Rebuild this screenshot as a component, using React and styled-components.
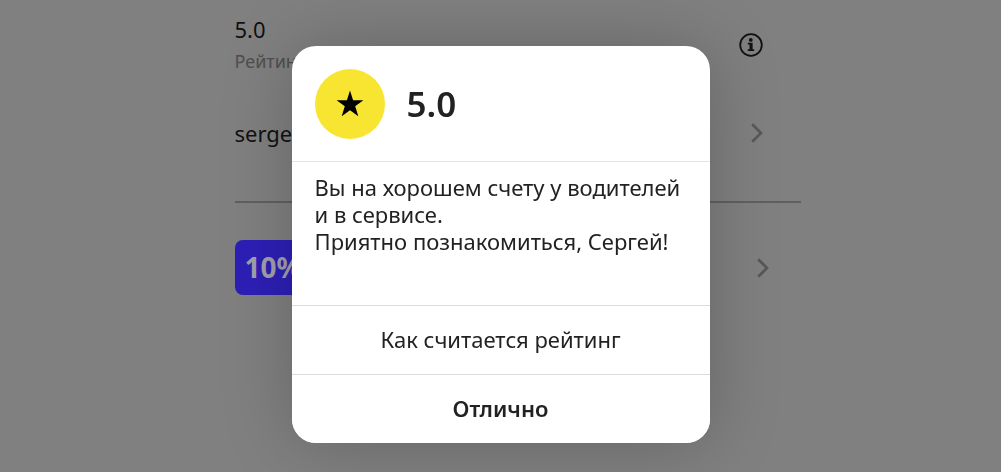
import React from "react";
import styled, { createGlobalStyle } from "styled-components";

const GlobalStyle = createGlobalStyle`
  *, *::before, *::after { box-sizing: border-box; }
  body {
    margin: 0;
    background: #808080;
    color: #111;
    font-family: "Noto Sans", "Open Sans", sans-serif;
  }
`;

const Page = styled.main`
  max-width: 600px;
  min-height: 100vh;
  margin: 0 auto;
  padding: 13px 0 0 34px;
`;

const Row = styled.div`
  display: flex;
  align-items: center;
  justify-content: space-between;
  min-height: ${(p) => p.$height}px;
  padding-right: ${(p) => p.$inset}px;
`;

const Rating = styled.div`
  display: flex;
  flex-direction: column;
`;

const Value = styled.span`
  font-size: 22px;
  line-height: 32px;
`;

const Caption = styled.span`
  font-size: 18px;
  line-height: 32px;
  color: #4e4e4e;
`;

const Divider = styled.hr`
  height: 2px;
  margin: 12px 0 37px;
  border: 0;
  background: #606060;
`;

const Promo = styled.div`
  width: 160px;
  padding: 0 10px;
  border-radius: 8px;
  background: #2d1fb6;
  color: #a2a0ac;
  font-size: 28px;
  font-weight: 700;
  line-height: 55px;
`;

const IconButton = styled.button`
  display: flex;
  padding: 0;
  border: 0;
  background: none;
  color: ${(p) => (p.$muted ? "#585858" : "#111")};
  cursor: pointer;
`;

const Overlay = styled.div`
  position: fixed;
  inset: 0;
  display: flex;
  align-items: center;
  justify-content: center;
  padding: 46px 16px 29px;
`;

const Dialog = styled.section`
  width: 100%;
  max-width: 418px;
  overflow: hidden;
  border-radius: 24px;
  background: #fff;
  color: #222;
  box-shadow: 0 0 70px rgba(0, 0, 0, 0.22);
`;

const Header = styled.header`
  display: flex;
  align-items: center;
  gap: 22px;
  padding: 23px 23px 22px;
`;

const Badge = styled.div`
  display: flex;
  align-items: center;
  justify-content: center;
  width: 70px;
  height: 70px;
  border-radius: 50%;
  background: #f8e532;
  color: #000;
`;

const Title = styled.h1`
  margin: 0;
  font-size: 35px;
  font-weight: 600;
  line-height: 46px;
`;

const Message = styled.p`
  min-height: 144px;
  margin: 0;
  padding: 12px 23px;
  border-top: 1px solid #e4e4e4;
  font-size: 22px;
  line-height: 27px;
`;

const Action = styled.button`
  display: block;
  width: 100%;
  height: 69px;
  padding: 0 23px 2px;
  border: 0;
  border-top: 1px solid #dcdcdc;
  background: #fff;
  color: #222;
  font-family: inherit;
  font-size: 22px;
  font-weight: ${(p) => (p.$primary ? 600 : 400)};
  cursor: pointer;
`;

function Chevron() {
  return (
    <svg width="12" height="20" viewBox="0 0 12 20" fill="none" stroke="currentColor" strokeWidth="2.7" aria-hidden="true">
      <path d="M1.2 1.2 10 10 1.2 18.8" />
    </svg>
  );
}

function InfoIcon() {
  return (
    <svg width="24" height="24" viewBox="0 0 24 24" aria-hidden="true">
      <circle cx="12" cy="12" r="10.8" fill="none" stroke="currentColor" strokeWidth="1.8" />
      <circle cx="11.8" cy="6.9" r="1.9" fill="currentColor" />
      <path d="M8.8 9.7h4.8v6.6h1.6V18H8.8v-1.7h1.7v-4.9H8.8z" fill="currentColor" />
    </svg>
  );
}

function Star() {
  return (
    <svg width="28" height="28" viewBox="0 0 28 28" fill="currentColor" aria-hidden="true">
      <path d="M14 0.5 17.1 10.2 27.4 10.2 19.2 16.3 22.3 26.2 14 20.2 5.7 26.2 8.8 16.3 0.6 10.2 10.9 10.2Z" />
    </svg>
  );
}

export default function App() {
  return (
    <>
      <GlobalStyle />
      <Page>
        <Row $height={62} $inset={38}>
          <Rating>
            <Value>5.0</Value>
            <Caption>Рейтинг</Caption>
          </Rating>
          <IconButton aria-label="О рейтинге">
            <InfoIcon />
          </IconButton>
        </Row>
        <Row $height={112} $inset={38}>
          <Value>sergey</Value>
          <IconButton $muted aria-label="Открыть профиль">
            <Chevron />
          </IconButton>
        </Row>
        <Divider />
        <Row $height={55} $inset={32}>
          <Promo>10%</Promo>
          <IconButton $muted aria-label="Открыть скидку">
            <Chevron />
          </IconButton>
        </Row>
      </Page>
      <Overlay>
        <Dialog role="dialog" aria-modal="true" aria-labelledby="rating-title">
          <Header>
            <Badge>
              <Star />
            </Badge>
            <Title id="rating-title">5.0</Title>
          </Header>
          <Message>
            Вы на хорошем счету у водителей
            <br />
            и в сервисе.
            <br />
            Приятно познакомиться, Сергей!
          </Message>
          <Action>Как считается рейтинг</Action>
          <Action $primary>Отлично</Action>
        </Dialog>
      </Overlay>
    </>
  );
}
